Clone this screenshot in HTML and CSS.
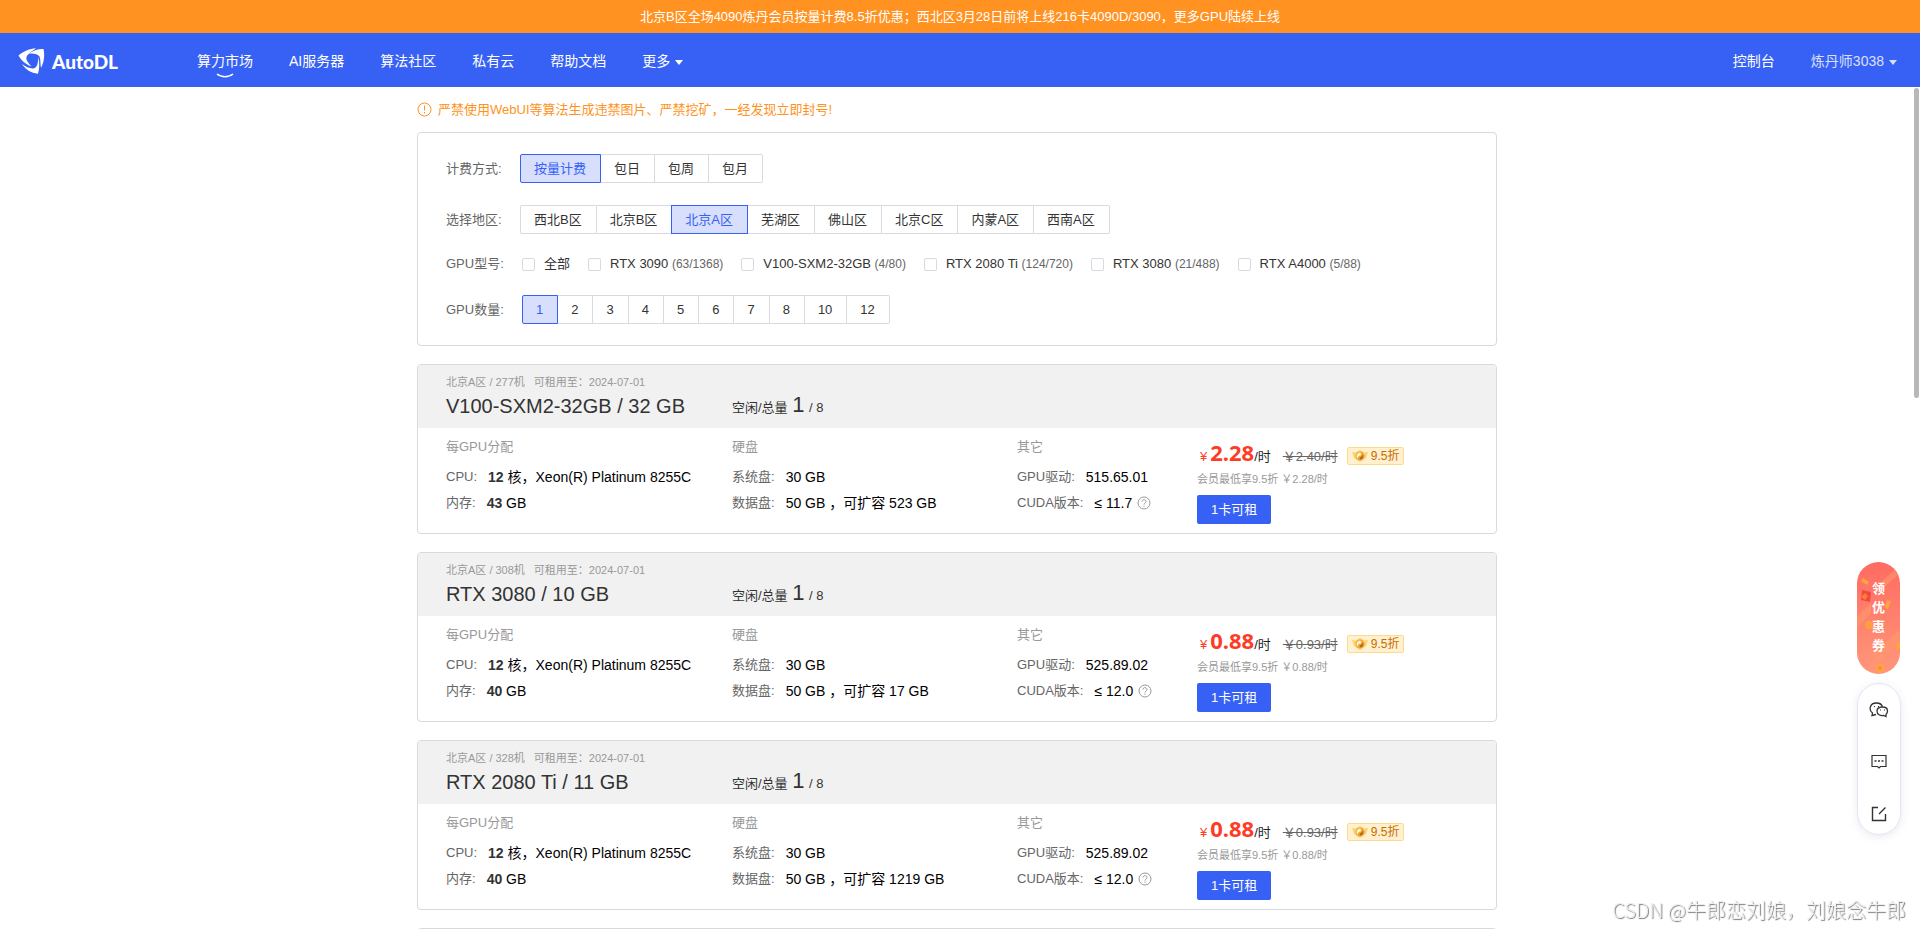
FILE: index.html
```html
<!DOCTYPE html>
<html lang="zh-CN">
<head>
<meta charset="utf-8">
<title>AutoDL 算力市场</title>
<link rel="stylesheet" href="styles.css">
</head>
<body>
<svg width="0" height="0" class="sprite" aria-hidden="true">
  <symbol id="i-help" viewBox="0 0 14 14"><circle cx="7" cy="7" r="6" fill="none" stroke="currentColor"/><path d="M5 5.600c0-2.600 4-2.600 4 0 0 1.300-2 1.400-2 3M7 9.600v1.200" fill="none" stroke="currentColor"/></symbol>
  <symbol id="i-medal" viewBox="0 0 16 12"><path d="M0 2l3.500.4L8 0l4.500 2.400L16 2l-2 6-6 4-6-4z" fill="#fbd46a"/><circle cx="8" cy="6" r="4.500" fill="#f0aa3c"/><path d="M8 2.500a3.500 3.500 0 0 0-2 6.300c-.6-2 .6-2.800 2-3.200s1.700-1.600 0-3.100z" fill="#fff3d0"/><path d="M8 9.500a3.500 3.500 0 0 0 2.600-5.800c.4 2-.6 2.600-1.700 3S7.200 8.300 8 9.500z" fill="#b8641a"/></symbol>
</svg>
<div class="notice">北京B区全场4090炼丹会员按量计费8.5折优惠；西北区3月28日前将上线216卡4090D/3090，更多GPU陆续上线</div>
<header class="nav">
  <a class="logo" href="#">
    <svg width="27" height="27" viewBox="0 0 27 27" fill="#fff" aria-hidden="true">
      <path d="M.5 7.500C5 3.500 12 .5 18 .3 14 3.500 9.500 6 8.500 9c-.7 2.500 1 5 5 9.500C8.500 16.500 3 12.500.5 7.500z"/>
      <path d="M11 5.500C15 2.500 21 .5 25.500 1c1.500 6 .5 13.500-2.500 19-.8-4-.3-9-1.500-11.500C20 6 16 5 11 5.500z"/>
      <path d="M20.300 9c1.500 6 1.200 11.500-.3 16.700C13 25 7.500 21.500 4 16c4 3 9 5.200 12 4.200 3.500-1 4.100-5.700 4.300-11.200z"/>
    </svg>
    <span>AutoDL</span>
  </a>
  <nav class="menu">
    <a class="active" href="#">算力市场<svg class="smile" width="18" height="6" viewBox="0 0 18 6" aria-hidden="true"><path d="M1 1c4 3.500 12 3.500 16 0" fill="none" stroke="#fff" stroke-width="1.500"/></svg></a>
    <a href="#">AI服务器</a>
    <a href="#">算法社区</a>
    <a href="#">私有云</a>
    <a href="#">帮助文档</a>
    <a class="drop" href="#">更多</a>
  </nav>
  <nav class="account">
    <a href="#">控制台</a>
    <a class="drop user" href="#">炼丹师3038</a>
  </nav>
</header>
<main class="page">
  <div class="column">
    <p class="warning">
      <svg width="15" height="15" viewBox="0 0 15 15" aria-hidden="true"><circle cx="7.500" cy="7.500" r="6.500" fill="none" stroke="currentColor"/><path d="M7.500 3.500v5M7.500 10v1.500" stroke="currentColor"/></svg>
      严禁使用WebUI等算法生成违禁图片、严禁挖矿，一经发现立即封号!
    </p>
    <section class="filters">
      <div class="row tall"><span class="label">计费方式:</span>
        <div class="group"><button class="on">按量计费</button><button>包日</button><button>包周</button><button>包月</button></div>
      </div>
      <div class="row tall"><span class="label">选择地区:</span>
        <div class="group"><button>西北B区</button><button>北京B区</button><button class="on">北京A区</button><button>芜湖区</button><button>佛山区</button><button>北京C区</button><button>内蒙A区</button><button>西南A区</button></div>
      </div>
      <div class="row short"><span class="label">GPU型号:</span>
        <div class="checks">
          <label><input type="checkbox">全部</label>
          <label><input type="checkbox">RTX 3090 <span>(63/1368)</span></label>
          <label><input type="checkbox">V100-SXM2-32GB <span>(4/80)</span></label>
          <label><input type="checkbox">RTX 2080 Ti <span>(124/720)</span></label>
          <label><input type="checkbox">RTX 3080 <span>(21/488)</span></label>
          <label><input type="checkbox">RTX A4000 <span>(5/88)</span></label>
        </div>
      </div>
      <div class="row"><span class="label">GPU数量:</span>
        <div class="group count"><button class="on">1</button><button>2</button><button>3</button><button>4</button><button>5</button><button>6</button><button>7</button><button>8</button><button>10</button><button>12</button></div>
      </div>
    </section>

    <article class="card">
      <header class="head">
        <div><p class="meta"><span>北京A区 / 277机</span><span>可租用至：2024-07-01</span></p><h2>V100-SXM2-32GB / 32 GB</h2></div>
        <p class="idle">空闲/总量 <b>1</b> / 8</p>
      </header>
      <div class="body">
        <dl><dt>每GPU分配</dt><dd><span>CPU:</span><b>12</b><i> 核，</i>Xeon(R) Platinum 8255C</dd><dd><span>内存:</span><b>43</b> GB</dd></dl>
        <dl><dt>硬盘</dt><dd><span>系统盘:</span>30 GB</dd><dd><span>数据盘:</span>50 GB<i> ，可扩容</i> 523 GB</dd></dl>
        <dl><dt>其它</dt><dd><span>GPU驱动:</span>515.65.01</dd><dd><span>CUDA版本:</span>≤ 11.7<svg class="help"><use href="#i-help"/></svg></dd></dl>
        <div class="buy">
          <p class="price"><em>¥</em><strong>2.28</strong>/时<del>￥2.40/时</del><span class="badge"><svg width="16" height="12"><use href="#i-medal"/></svg>9.5折</span></p>
          <p class="member">会员最低享9.5折 ￥2.28/时</p>
          <button class="rent">1卡可租</button>
        </div>
      </div>
    </article>

    <article class="card">
      <header class="head">
        <div><p class="meta"><span>北京A区 / 308机</span><span>可租用至：2024-07-01</span></p><h2>RTX 3080 / 10 GB</h2></div>
        <p class="idle">空闲/总量 <b>1</b> / 8</p>
      </header>
      <div class="body">
        <dl><dt>每GPU分配</dt><dd><span>CPU:</span><b>12</b><i> 核，</i>Xeon(R) Platinum 8255C</dd><dd><span>内存:</span><b>40</b> GB</dd></dl>
        <dl><dt>硬盘</dt><dd><span>系统盘:</span>30 GB</dd><dd><span>数据盘:</span>50 GB<i> ，可扩容</i> 17 GB</dd></dl>
        <dl><dt>其它</dt><dd><span>GPU驱动:</span>525.89.02</dd><dd><span>CUDA版本:</span>≤ 12.0<svg class="help"><use href="#i-help"/></svg></dd></dl>
        <div class="buy">
          <p class="price"><em>¥</em><strong>0.88</strong>/时<del>￥0.93/时</del><span class="badge"><svg width="16" height="12"><use href="#i-medal"/></svg>9.5折</span></p>
          <p class="member">会员最低享9.5折 ￥0.88/时</p>
          <button class="rent">1卡可租</button>
        </div>
      </div>
    </article>

    <article class="card">
      <header class="head">
        <div><p class="meta"><span>北京A区 / 328机</span><span>可租用至：2024-07-01</span></p><h2>RTX 2080 Ti / 11 GB</h2></div>
        <p class="idle">空闲/总量 <b>1</b> / 8</p>
      </header>
      <div class="body">
        <dl><dt>每GPU分配</dt><dd><span>CPU:</span><b>12</b><i> 核，</i>Xeon(R) Platinum 8255C</dd><dd><span>内存:</span><b>40</b> GB</dd></dl>
        <dl><dt>硬盘</dt><dd><span>系统盘:</span>30 GB</dd><dd><span>数据盘:</span>50 GB<i> ，可扩容</i> 1219 GB</dd></dl>
        <dl><dt>其它</dt><dd><span>GPU驱动:</span>525.89.02</dd><dd><span>CUDA版本:</span>≤ 12.0<svg class="help"><use href="#i-help"/></svg></dd></dl>
        <div class="buy">
          <p class="price"><em>¥</em><strong>0.88</strong>/时<del>￥0.93/时</del><span class="badge"><svg width="16" height="12"><use href="#i-medal"/></svg>9.5折</span></p>
          <p class="member">会员最低享9.5折 ￥0.88/时</p>
          <button class="rent">1卡可租</button>
        </div>
      </div>
    </article>

    <article class="card"><header class="head"></header></article>
  </div>
  <div class="scrollbar"></div>
</main>

<aside class="side">
  <a class="coupon" href="#">
    <svg class="confetti" viewBox="0 0 43 112" aria-hidden="true">
      <path d="M20 24L37 8l4 5-17 15zM0 55l14-14v10L0 66zM14 92l29-24v12L22 100z" fill="#ff9a6c" opacity=".55"/>
      <path d="M6 16l6 4-2 3-6-4zM30 38l4 1-3 8-3-1zM40 81l3-1v6l-4 3z" fill="#ffa63c"/>
      <path d="M5 28l9 2-1 10-9-2z" fill="#f2493d"/><path d="M4 35l4-4 3 3-3 4z" fill="#ff7a3c"/>
      <circle cx="12" cy="63" r="4" fill="#ff9f3f"/><circle cx="23" cy="106" r="4" fill="#ffa63c"/><circle cx="23" cy="106" r="2" fill="#ff8a3c"/>
    </svg>
    <span>领</span><span>优</span><span>惠</span><span>券</span>
  </a>
  <div class="tools">
    <button aria-label="微信"><svg width="20" height="16" viewBox="0 0 20 16"><path d="M7 12.500l-4 1 .5-2.500C-.5 8 .5 1 7.500 1 11 1 13 3 13.500 5M8 9c0-5 10-5.500 10.500-.5.200 1.800-.5 3-1.500 4v2l-2.500-1C11 14 8 12.500 8 9z" fill="none" stroke="#333" stroke-width="1.300"/><path d="M5 4.500h1M9 4.500h1M11 8h1M15 8h1" stroke="#333" stroke-width="1.200"/></svg></button>
    <button aria-label="客服"><svg width="16" height="16" viewBox="0 0 16 16"><path d="M1 1.500h14v11H9.500L8 14l-1.500-1.500H1z" fill="none" stroke="#333" stroke-width="1.200"/><path d="M3.500 7h2M7 7h2M10.500 7h2" stroke="#333" stroke-width="1.500"/></svg></button>
    <button aria-label="反馈"><svg width="16" height="16" viewBox="0 0 16 16"><path d="M7 1.500H1.500v13h13V8M8 8l6.500-6.500" fill="none" stroke="#333" stroke-width="1.400"/></svg></button>
  </div>
</aside>
<div class="watermark">CSDN @牛郎恋刘娘，刘娘念牛郎</div>
</body>
</html>
```

FILE: styles.css
```css
* { box-sizing: border-box; }
body {
  margin: 0;
  height: 100vh;
  display: flex;
  flex-direction: column;
  overflow: hidden;
  background: #fff;
  color: #333;
  font: 13px/20px "Liberation Sans", "Noto Sans CJK SC", sans-serif;
}
p, h2, dl, dd { margin: 0; }
a { color: inherit; text-decoration: none; }
button { font: inherit; color: inherit; cursor: pointer; }
.sprite { position: absolute; }

.notice {
  flex: none;
  background: #ff9221;
  color: #fff;
  text-align: center;
  line-height: 33px;
}
.nav {
  flex: none;
  display: flex;
  align-items: center;
  height: 54px;
  padding: 2px 23px 0 18px;
  background: #3761f5;
  color: #fff;
  font-size: 14px;
}
.logo { display: flex; align-items: center; gap: 7px; width: 179px; font: 900 19px/27px Lato, sans-serif; }
.menu { display: flex; gap: 36px; flex: 1; }
.account { display: flex; gap: 36px; }
.user { opacity: .8; }
.active { position: relative; }
.smile { position: absolute; left: 50%; top: 22px; margin-left: -9px; }
.drop { display: flex; align-items: center; gap: 5px; }
.drop::after { content: ""; margin-top: 2px; border: 4px solid transparent; border-top: 5px solid; border-bottom: 0; }

.page { position: relative; flex: 1; min-height: 0; overflow: hidden; padding-right: 6px; }
.scrollbar { position: absolute; top: 1px; right: 1px; width: 5px; height: 310px; border-radius: 3px; background: #b8b8b8; }
.column { max-width: 1080px; margin: 0 auto; }
.warning { display: flex; align-items: center; gap: 6px; height: 45px; color: #ff9221; }

.filters { border: 1px solid #d8d9e1; border-radius: 4px; padding: 21px 28px; margin-bottom: 18px; }
.row { display: flex; align-items: center; height: 29px; }
.row.tall { margin-bottom: 22px; }
.row.short { height: 16px; margin: 0 0 23px; }
.label { width: 74px; color: #666; }
.group { display: flex; }
.group button {
  height: 29px;
  padding: 0 14px 0 13px;
  border: 1px solid #d8d9e1;
  border-left: 0;
  background: #fff;
}
.group button:first-child { border-left: 1px solid #d8d9e1; border-radius: 2px 0 0 2px; }
.group button:last-child { border-radius: 0 2px 2px 0; }
.group .on, .group .on:first-child { background: #d8dffd; border-color: #3761f5; color: #3761f5; }
.group .on:not(:first-child) { box-shadow: -1px 0 #3761f5; }
.count { margin-left: 2px; }
.checks { display: flex; gap: 18px; margin-left: 2px; }
.checks label { display: flex; align-items: center; white-space: pre; }
.checks label span { color: #666; font-size: 12px; }
.checks input {
  appearance: none;
  width: 13px;
  height: 13px;
  margin: 0 9px 0 0;
  border: 1px solid #d8d9e1;
  border-radius: 2px;
  background: #fff;
}

.card { height: 170px; margin-bottom: 18px; border: 1px solid #d8d9e1; border-radius: 4px; overflow: hidden; }
.head, .body { display: grid; grid-template-columns: 286px 285px 180px 1fr; padding: 0 28px; }
.head { height: 63px; background: #f1f1f1; }
.meta { display: flex; gap: 9px; padding-top: 7px; color: #999; font-size: 11px; }
h2 { font-size: 20px; font-weight: 400; line-height: 29px; white-space: nowrap; }
.idle { padding-top: 26px; line-height: 28px; }
.idle b { font-size: 22px; font-weight: 400; margin: 0 1px; }
.body { padding-top: 9px; }
dt { color: #999; margin-bottom: 7px; }
dd { display: flex; align-items: center; height: 26px; font-size: 14px; color: #000; white-space: pre; }
dd span { color: #666; font-size: 13px; margin-right: 11px; }
dd i { font-style: normal; }
dd b { color: #333; }
.help { width: 14px; height: 14px; margin-left: 5px; color: #999; }
.price { display: flex; align-items: baseline; height: 32px; line-height: 30px; color: #222; white-space: nowrap; padding-left: 3px; }
.price em { font-style: normal; color: #ff3b26; margin-right: 3px; }
.price strong { font: bold 22px/30px "Noto Sans", sans-serif; color: #ff3b26; }
.price del { color: #666; margin: 0 9px 0 12px; }
.badge {
  display: flex;
  align-items: center;
  align-self: center;
  gap: 3px;
  height: 18px;
  margin-top: 6px;
  padding: 0 4px;
  border: 1px solid #fcdc8c;
  border-radius: 2px;
  background: #fff1cf;
  color: #c96b00;
  font-size: 12px;
  line-height: 16px;
}
.member { margin-bottom: 6px; color: #999; font-size: 11px; }
.rent { height: 29px; padding: 0 14px; border: 0; border-radius: 2px; background: #3761f5; color: #fff; }

.side { position: fixed; right: 19px; bottom: 94px; width: 44px; display: grid; gap: 9px; }
.coupon {
  position: relative;
  display: flex;
  flex-direction: column;
  align-items: center;
  width: 43px;
  height: 112px;
  padding-top: 17px;
  border-radius: 22px;
  overflow: hidden;
  background: linear-gradient(#ff6b62, #ff9779);
  color: #fff;
  font-weight: 700;
  line-height: 19px;
}
.confetti { position: absolute; inset: 0; }
.coupon span { position: relative; }
.tools {
  display: flex;
  flex-direction: column;
  gap: 12px;
  padding-top: 6px;
  border: 1px solid #e4e5f0;
  border-radius: 22px;
  background: #fff;
  box-shadow: 0 2px 8px #5060a020;
}
.tools button { display: flex; align-items: center; justify-content: center; height: 40px; padding: 0; border: 0; background: none; }
.watermark {
  position: fixed;
  right: 14px;
  bottom: 4px;
  color: #eee;
  font: 300 20px/30px "Noto Sans CJK TC", sans-serif;
  text-shadow: 1px 1px 1px #777;
}
```
